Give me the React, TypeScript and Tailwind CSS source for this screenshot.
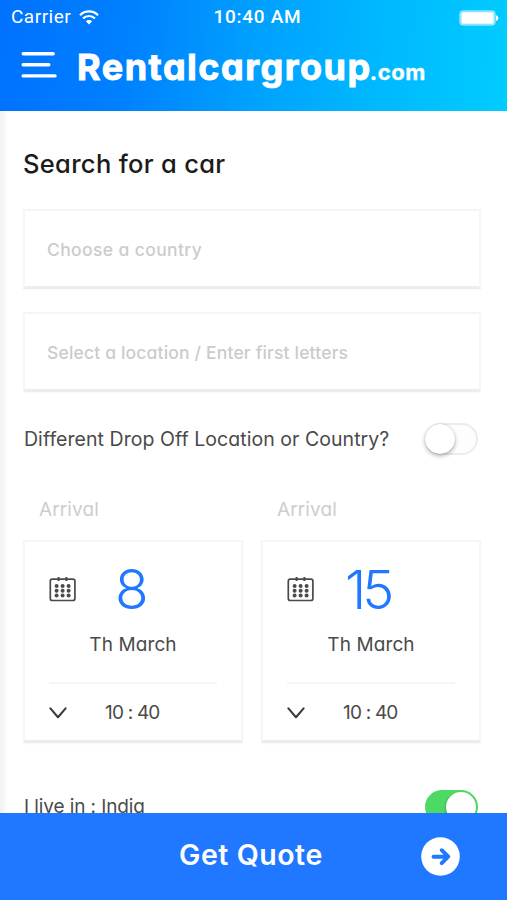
function WifiIcon() {
  return (
    <svg width="20" height="15" viewBox="0 0 20 15" fill="none" stroke="white" strokeWidth="2.2">
      <path d="M1 5.2C6 .2 14 .2 19 5.2" />
      <path d="M4.1 8.4C7.4 5.2 12.6 5.2 15.9 8.4" />
      <path d="M10 14.4 6.9 11.2C8.6 9.6 11.4 9.6 13.1 11.2Z" fill="white" stroke="none" />
    </svg>
  );
}

function BatteryIcon() {
  return (
    <svg width="40" height="16" viewBox="0 0 40 16">
      <rect x=".8" y=".8" width="35.4" height="14.4" rx="3" fill="white" fillOpacity=".45" stroke="white" strokeOpacity=".5" />
      <rect x="2.4" y="2.2" width="32.2" height="11.6" rx="1.5" fill="white" />
      <path d="M37 5.2c3.2.6 3.2 5 0 5.6Z" fill="white" />
    </svg>
  );
}

function MenuIcon() {
  return (
    <svg width="36" height="28" viewBox="0 0 36 28" stroke="white" strokeWidth="3.4" strokeLinecap="round">
      <path d="M2.2 2.7h30M2.2 13.7h25.6M2.2 24.9h31.8" />
    </svg>
  );
}

function CalendarIcon() {
  return (
    <svg className="-mt-0.5" width="28" height="26" viewBox="0 0 28 26" fill="none" stroke="#4a4a4a" strokeWidth="1.7">
      <rect x="1.3" y="3.2" width="24.6" height="21.3" rx="2" />
      <path d="M9.6 1v4M17.4 1v4" strokeWidth="2" />
      {[9.9, 14.7, 19.5].map((y) =>
        [7.6, 13.6, 19.6].map((x) => (
          <circle key={`${x}-${y}`} cx={x} cy={y} r="2" fill="#4a4a4a" stroke="none" />
        )),
      )}
    </svg>
  );
}

function ChevronIcon() {
  return (
    <svg width="18" height="12" viewBox="0 0 18 12" fill="none" stroke="#3c3c3c" strokeWidth="2.1" strokeLinecap="round" strokeLinejoin="round">
      <path d="M1.4 1.4 9 10.2l7.6-8.8" />
    </svg>
  );
}

function ArrowIcon() {
  return (
    <svg width="39" height="39" viewBox="0 0 39 39" fill="none">
      <circle cx="19.5" cy="19.5" r="19.3" fill="white" />
      <path d="M12.5 19.7h14.5M20.7 13.2l6.6 6.5-6.6 6.5" stroke="#1f78ff" strokeWidth="3.9" strokeLinecap="round" strokeLinejoin="round" />
    </svg>
  );
}

function Field({ text, className }: { text: string; className: string }) {
  return (
    <div className="flex h-20 items-center border-2 border-b-3 border-[#f6f6f6] border-b-[#ededed] bg-white pl-[22px] pt-1 font-medium text-[#cbcbce] shadow-[0_1px_2px_rgba(0,0,0,0.03)]">
      <span className={className}>{text}</span>
    </div>
  );
}

function DateCard({ day, className }: { day: string; className: string }) {
  return (
    <div className="flex flex-col">
      <div className="pl-4 text-[19px] leading-6 tracking-[0.1px] text-[#cdcdcd]">Arrival</div>
      <div className="mt-[18px] h-[203px] border-2 border-b-3 border-[#f6f6f6] border-b-[#ececec] bg-white shadow-[0_1px_2px_rgba(0,0,0,0.03)]">
        <div className="flex h-[95px] items-center pl-6">
          <CalendarIcon />
          <span className={className}>{day}</span>
        </div>
        <div className="text-center text-[19px] leading-4 tracking-[0.1px] text-[#4a4a4a]">Th March</div>
        <div className="mx-6 mt-[29px] h-0.5 bg-[#f5f5f5]" />
        <div className="flex h-[57px] items-center pl-6">
          <ChevronIcon />
          <span className="ml-[38px] pt-px text-[19px] tracking-[-0.8px] text-[#4a4a4a]">10 : 40</span>
        </div>
      </div>
    </div>
  );
}

export default function App() {
  return (
    <div className="flex h-[900px] w-[507px] flex-col overflow-hidden whitespace-nowrap bg-white font-['Inter',sans-serif] [font-feature-settings:'cv11']">
      <header className="h-[111px] shrink-0 bg-[linear-gradient(96deg,#0071ff_0%,#0080ff_25%,#00a0ff_50%,#00b9ff_75%,#00ccff_100%)] text-white">
        <div className="grid h-[35px] grid-cols-3 items-center pl-[11px] pr-[8px] font-[Roboto,sans-serif] text-[19px]">
          <div className="flex items-center gap-2">
            <span className="tracking-[0.5px]">Carrier</span>
            <WifiIcon />
          </div>
          <span className="pl-[5px] text-center font-medium tracking-[0.7px]">10:40 AM</span>
          <div className="flex justify-end">
            <BatteryIcon />
          </div>
        </div>
        <div className="flex items-start pl-[21px] pt-4">
          <MenuIcon />
          <div className="ml-5 flex items-baseline font-bold leading-8 [-webkit-text-stroke:0.9px_white]">
            <span className="text-[36px] tracking-[1.5px]">Rentalcargroup</span>
            <span className="-ml-0.5 text-[22px] tracking-[0.6px] [-webkit-text-stroke:0.3px_white]">.com</span>
          </div>
        </div>
      </header>
      <main className="min-h-0 flex-1 overflow-hidden bg-[linear-gradient(90deg,#f4f4f4_0,#f4f4f4_3px,#fbfbfb_5px,#ffffff_9px)] pl-[23px] pr-[26px] pt-[37px]">
        <h1 className="text-[25.5px] font-medium leading-8 tracking-[0.32px] text-[#1b1b1b]">Search for a car</h1>
        <div className="mt-[29px] flex flex-col gap-[23px]">
          <Field text="Choose a country" className="text-[17.5px] tracking-[0.38px]" />
          <Field text="Select a location / Enter first letters" className="text-[17.5px] tracking-[0.17px]" />
        </div>
        <div className="mt-[30px] flex h-[34px] items-center justify-between pl-px pr-[3px]">
          <span className="pt-0.5 text-[19.5px] tracking-[0.05px] text-[#4a4a4a]">Different Drop Off Location or Country?</span>
          <div className="flex h-8 w-[53px] items-center rounded-full border-2 border-[#ececec] bg-[#fdfdfd]">
            <div className="-ml-0.5 size-[30px] shrink-0 rounded-full bg-white shadow-[0_2px_4px_rgba(0,0,0,0.3),0_0_1px_rgba(0,0,0,0.25)]" />
          </div>
        </div>
        <div className="mt-[42px] grid grid-cols-2 gap-[18px]">
          <DateCard day="8" className="ml-[38px] text-[55px] font-[280] leading-none text-[#1f78ff]" />
          <DateCard day="15" className="ml-[30px] text-[54px] font-[280] leading-none tracking-[-4px] text-[#1f78ff]" />
        </div>
        <div className="mt-[47px] flex h-[34px] items-center justify-between pl-px pr-[3px]">
          <span className="text-[19px] tracking-[-0.1px] text-[#4a4a4a]">I live in : India</span>
          <div className="flex h-[34px] w-[53px] items-center justify-end rounded-full bg-[#4cd964] pr-0.5">
            <div className="size-[30px] rounded-full bg-white shadow-[-1px_1px_2px_rgba(0,0,0,0.2)]" />
          </div>
        </div>
      </main>
      <footer className="flex h-[87px] shrink-0 items-center bg-[#1f78ff] pl-[179px] pr-[47px] text-white">
        <span className="pb-0.5 text-[28.5px] font-semibold tracking-[0.55px]">Get Quote</span>
        <div className="ml-auto">
          <ArrowIcon />
        </div>
      </footer>
    </div>
  );
}
